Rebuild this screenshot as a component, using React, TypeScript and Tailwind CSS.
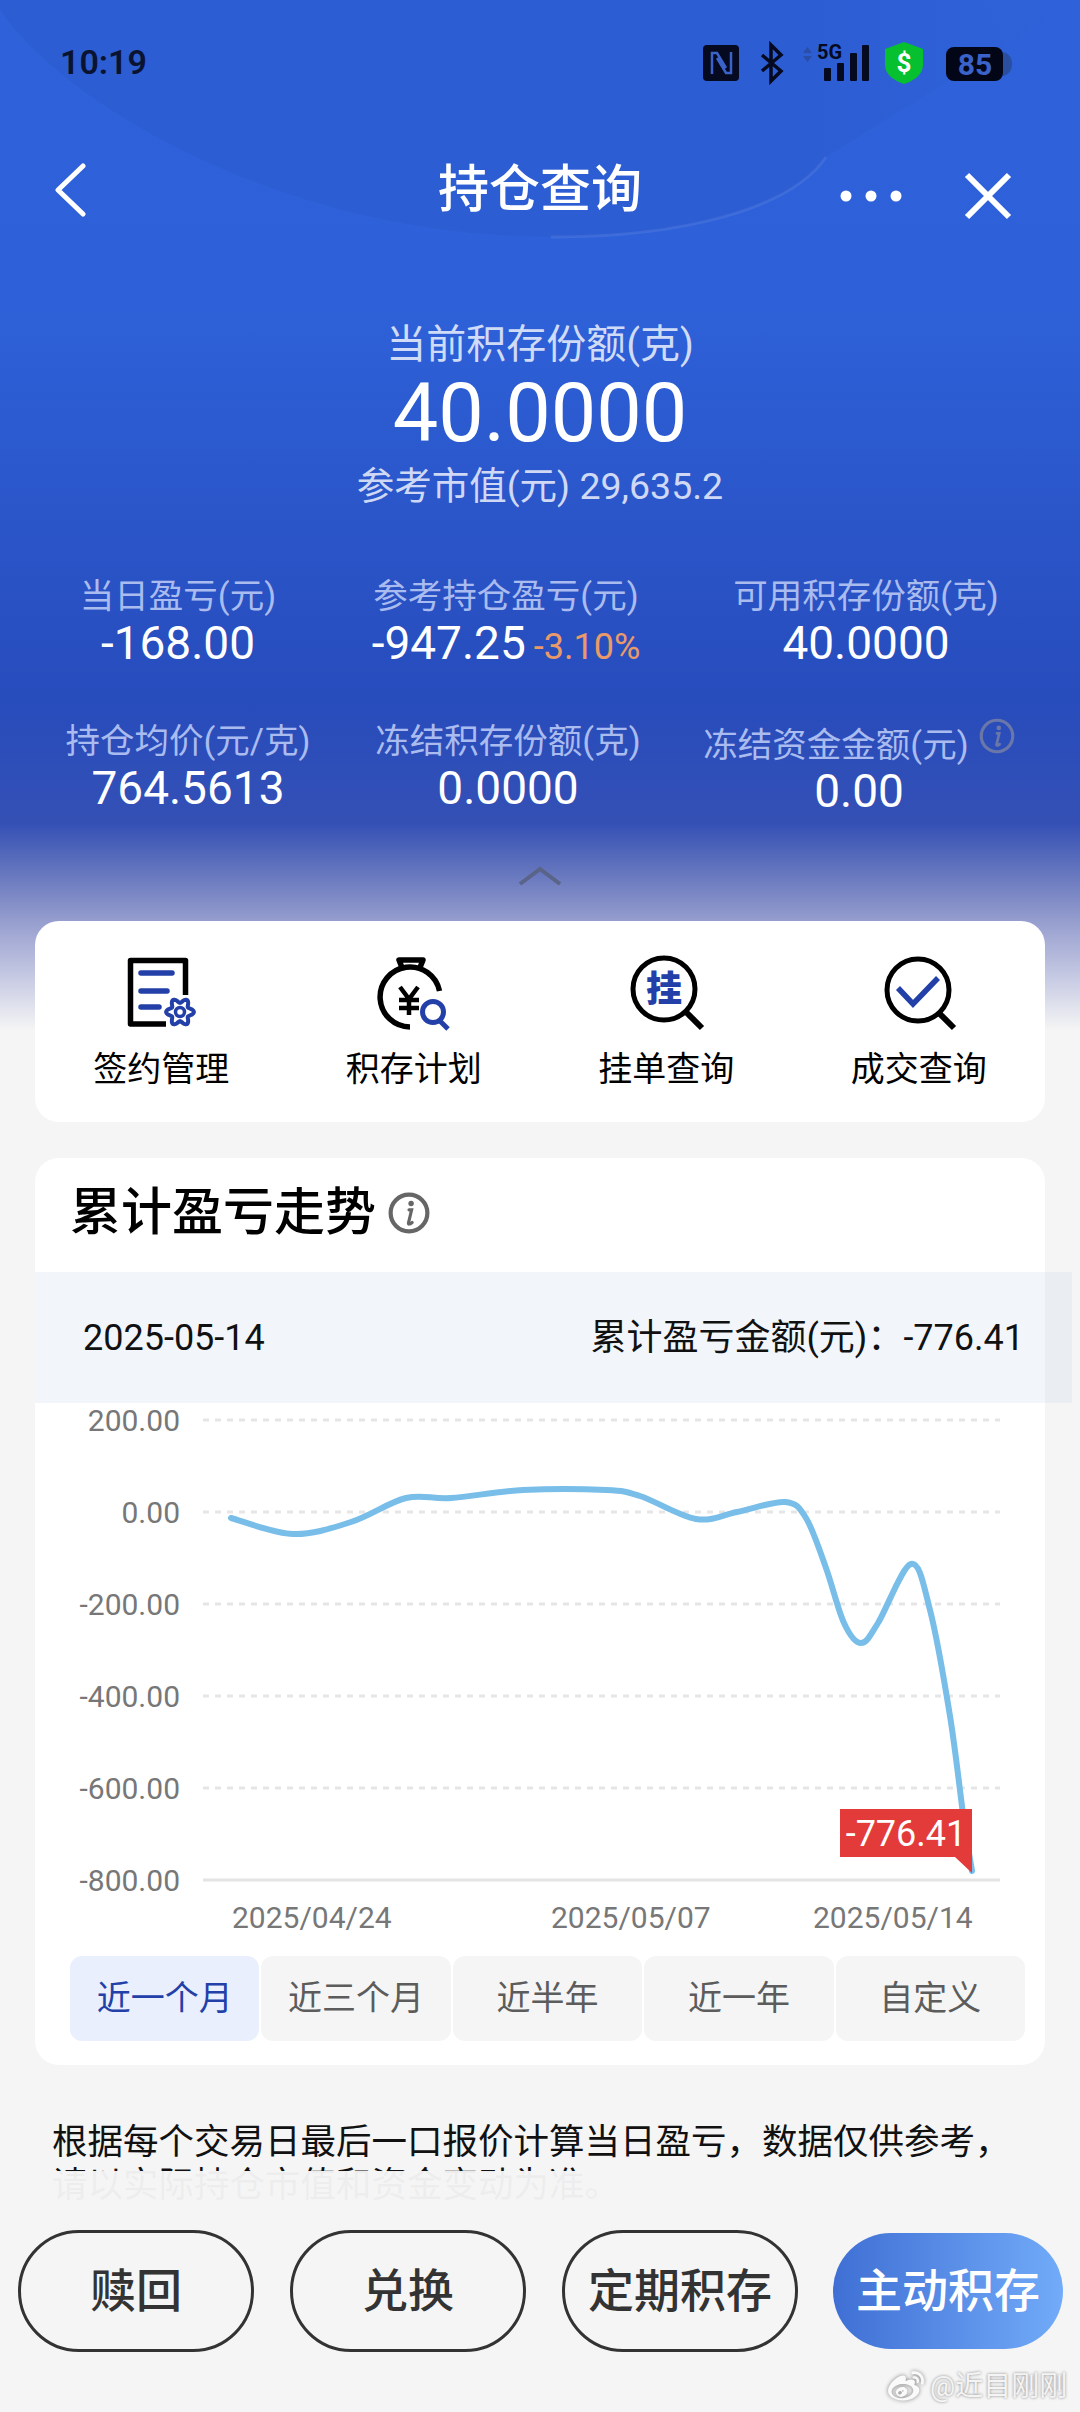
import React from 'react';
import { FaWeibo } from 'react-icons/fa';

const BLUE = '#2340a8';

const curve: [number, number][] = [
  [196, 115], [258, 131], [316, 119], [371, 95], [416, 95], [488, 87], [571, 87], [605, 93],
  [661, 116], [702, 109], [750, 99], [771, 115], [791, 165], [809, 220], [826, 240], [843, 220],
  [876, 161], [895, 207], [915, 313], [929, 418], [937, 468],
];

// catmull-rom through the sampled points
const smoothPath = (pts: [number, number][]) => {
  let d = `M${pts[0][0]} ${pts[0][1]}`;
  for (let i = 0; i < pts.length - 1; i++) {
    const p0 = pts[Math.max(i - 1, 0)];
    const p1 = pts[i];
    const p2 = pts[i + 1];
    const p3 = pts[Math.min(i + 2, pts.length - 1)];
    const c1x = p1[0] + (p2[0] - p0[0]) / 6;
    const c1y = p1[1] + (p2[1] - p0[1]) / 6;
    const c2x = p2[0] - (p3[0] - p1[0]) / 6;
    const c2y = p2[1] - (p3[1] - p1[1]) / 6;
    d += ` C${c1x.toFixed(1)} ${c1y.toFixed(1)} ${c2x.toFixed(1)} ${c2y.toFixed(1)} ${p2[0]} ${p2[1]}`;
  }
  return d;
};

// six lobed cog outline
const cogPath = (cx: number, cy: number) => {
  const parts: string[] = [];
  for (let i = 0; i <= 72; i++) {
    const a = (i / 72) * Math.PI * 2;
    const r = 11.5 + 2.4 * Math.cos(6 * a);
    parts.push(`${i === 0 ? 'M' : 'L'}${(cx + r * Math.cos(a)).toFixed(2)} ${(cy + r * Math.sin(a)).toFixed(2)}`);
  }
  return parts.join(' ') + 'Z';
};

const StatusIcons = () => (
  <svg width="315" height="45" viewBox="0 0 315 45" className="mt-[2px]">
    <rect x="3" y="4" width="36" height="36" rx="4" fill="#050a20" />
    <path d="M12 33V12h5l9 15M31 11v21h-5l-9-15" fill="none" stroke="#3a62c8" strokeWidth="2.5" />
    <path d="M62 14l19 16-10 10V4l10 10-19 16" fill="none" stroke="#050a20" strokeWidth="3.5" />
    <path d="M107.5 6l-4.5 6h9zM103 15h9l-4.5 6z" fill="#2a4ea8" />
    <text x="117" y="18" fontSize="20" fontWeight="700" fill="#050a20">5G</text>
    <rect x="124" y="27" width="7" height="13" rx="1" fill="#050a20" />
    <rect x="137" y="22" width="7" height="18" rx="1" fill="#050a20" />
    <rect x="150" y="12" width="7" height="28" rx="1" fill="#050a20" />
    <rect x="162" y="4" width="7" height="36" rx="1" fill="#050a20" />
    <path d="M204 1l19 7v16c0 10-10 16-19 19-9-3-19-9-19-19V8z" fill="#07c02f" />
    <text x="204" y="31" fontSize="26" fontWeight="700" fill="#fff" textAnchor="middle">$</text>
    <path d="M303 11c5 1 9 5 9 12s-4 11-9 12z" fill="#2a4ea0" />
    <rect x="246" y="6" width="57" height="34" rx="8" fill="#020617" />
    <text x="275" y="34" fontSize="30" fontWeight="700" fill="#3a62c8" textAnchor="middle">85</text>
  </svg>
);

const SignIcon = () => (
  <svg width="80" height="80" viewBox="0 0 80 80">
    <path d="M45 69H9.5V5.5h55V40" fill="none" stroke="#000" strokeWidth="5.5" strokeLinejoin="round" />
    <path d="M20 18h31M20 36h26M20 52h18" stroke={BLUE} strokeWidth="5.5" strokeLinecap="round" />
    <path d={cogPath(59, 57)} fill="#fff" stroke={BLUE} strokeWidth="4" strokeLinejoin="round" />
    <circle cx="59" cy="57" r="4.5" fill="none" stroke={BLUE} strokeWidth="3.5" />
  </svg>
);

const PlanIcon = () => (
  <svg width="80" height="80" viewBox="0 0 80 80">
    <path d="M36 72A30 30 0 1 1 65.5 36" fill="none" stroke="#000" strokeWidth="5.5" />
    <path d="M29 15L25 5h24l-4 10" fill="none" stroke="#000" strokeWidth="5.5" strokeLinejoin="round" />
    <path d="M26 32l9 12 9-12M35 44v16M25 45h20M25 53h20" fill="none" stroke="#000" strokeWidth="4.5" />
    <circle cx="59" cy="57" r="10.5" fill="#fff" stroke={BLUE} strokeWidth="5" />
    <path d="M65 65l9 9" stroke={BLUE} strokeWidth="5" />
  </svg>
);

const OrderIcon = () => (
  <svg width="80" height="80" viewBox="0 0 80 80">
    <circle cx="38" cy="34" r="31" fill="none" stroke="#000" strokeWidth="5" />
    <path d="M60 57l16 16" stroke="#000" strokeWidth="6" />
    <text x="38" y="47" fontSize="36" fontWeight="900" textAnchor="middle" fill={BLUE}>挂</text>
  </svg>
);

const DealIcon = () => (
  <svg width="80" height="80" viewBox="0 0 80 80">
    <circle cx="39" cy="35" r="31" fill="none" stroke="#000" strokeWidth="5" />
    <path d="M60 58l15 15" stroke="#000" strokeWidth="6" />
    <path d="M19 33l15 16 25-26" fill="none" stroke={BLUE} strokeWidth="5.5" />
  </svg>
);

const InfoMark = ({ size, color, width }: { size: number; color: string; width: number }) => (
  <svg width={size} height={size} viewBox="0 0 40 40">
    <circle cx="20" cy="20" r="17.5" fill="none" stroke={color} strokeWidth={width} />
    <circle cx="22" cy="11" r="2.6" fill={color} />
    <path d="M20 17h2.5l-3 12.5c-.3 1.3 1 1.6 3.5-.5" fill="none" stroke={color} strokeWidth="3" strokeLinecap="round" />
  </svg>
);

const Stat = ({ label, value, extra }: { label: string; value: string; extra?: string }) => (
  <div className="flex flex-col items-center">
    <div className="h-[44px] whitespace-nowrap text-[34.5px] leading-[44px] text-[#aabcef]">{label}</div>
    <div className="h-[50px] whitespace-nowrap text-[46px] leading-[50px] text-white">
      {value}
      {extra && <span className="ml-[8px] text-[36px] text-[#ea9a68]">{extra}</span>}
    </div>
  </div>
);

const shortcuts = [
  { label: '签约管理', icon: <SignIcon /> },
  { label: '积存计划', icon: <PlanIcon /> },
  { label: '挂单查询', icon: <OrderIcon /> },
  { label: '成交查询', icon: <DealIcon /> },
];

const ranges = ['近一个月', '近三个月', '近半年', '近一年', '自定义'];
const yTicks = [
  { label: '200.00', y: 17 },
  { label: '0.00', y: 109 },
  { label: '-200.00', y: 201 },
  { label: '-400.00', y: 293 },
  { label: '-600.00', y: 385 },
  { label: '-800.00', y: 477 },
];

const TrendChart = () => (
  <svg width="1010" height="553" viewBox="0 0 1010 553" className="block">
    {yTicks.map((t) => (
      <g key={t.label}>
        <text x="145" y={t.y} fontSize="30" fill="#777" textAnchor="end" dominantBaseline="central">{t.label}</text>
        {t.y === 477 ? (
          <path d="M168 477H965" stroke="#e4e4e4" strokeWidth="3" />
        ) : (
          <path d={`M168 ${t.y}H965`} stroke="#e6e6e6" strokeWidth="3" strokeDasharray="6 6" />
        )}
      </g>
    ))}
    <path d={smoothPath(curve)} fill="none" stroke="#78bee9" strokeWidth="6" strokeLinecap="round" />
    <path d="M805 406H937V470L920 454H805z" fill="#e33a3a" />
    <text x="871" y="431" fontSize="36" fill="#fff" textAnchor="middle" dominantBaseline="central">-776.41</text>
    <text x="197" y="514" fontSize="30" fill="#777" dominantBaseline="central">2025/04/24</text>
    <text x="516" y="514" fontSize="30" fill="#777" dominantBaseline="central">2025/05/07</text>
    <text x="778" y="514" fontSize="30" fill="#777" dominantBaseline="central">2025/05/14</text>
  </svg>
);

export default function App() {
  return (
    <div className="relative h-[2412px] w-[1080px] overflow-hidden bg-[#f5f5f5] font-['Roboto','Noto_Sans_CJK_SC',sans-serif]">
      {/* header backdrop */}
      <div className="absolute inset-x-0 top-0 h-[1030px] bg-[linear-gradient(180deg,#2f62da_0px,#2e61d9_300px,#274cbc_700px,#3450b5_823px,#6d7cc0_880px,#959dce_920px,#c4c8e2_975px,#f5f5f5_1030px)]" />
      <svg width="1080" height="300" viewBox="0 0 1080 300" className="absolute left-0 top-0">
        <defs>
          <linearGradient id="blob" x1="0" x2="1" y1="0" y2="0">
            <stop offset="0" stopColor="#2d5dd3" />
            <stop offset="0.75" stopColor="#2d5dd3" />
            <stop offset="1" stopColor="#2d5dd3" stopOpacity="0" />
          </linearGradient>
        </defs>
        <path d="M0 10C60 100 280 237 551 237C680 237 790 210 826 157L1080 0H0z" fill="url(#blob)" />
        <path d="M551 237C680 237 790 210 826 157" fill="none" stroke="#fff" strokeOpacity="0.08" strokeWidth="3" />
      </svg>

      <div className="relative flex flex-col">
        <div className="flex h-[124px] items-center justify-between pl-[60px] pr-[65px]">
          <span className="text-[34px] font-semibold text-[#0a1330]">10:19</span>
          <StatusIcons />
        </div>

        <div className="grid h-[132px] grid-cols-[1fr_auto_1fr] items-center px-[68px]">
          <svg width="36" height="54" viewBox="0 0 36 54" className="-ml-[16px]">
            <path d="M31 3L6 27l25 24" fill="none" stroke="#fff" strokeWidth="5" strokeLinecap="round" strokeLinejoin="round" />
          </svg>
          <div className="text-[51px] font-medium leading-[60px] text-white">持仓查询</div>
          <div className="mt-[12px] flex items-center justify-end gap-[62px]">
            <svg width="62" height="12" viewBox="0 0 62 12">
              <circle cx="6" cy="6" r="5.5" fill="#fff" />
              <circle cx="31" cy="6" r="5.5" fill="#fff" />
              <circle cx="56" cy="6" r="5.5" fill="#fff" />
            </svg>
            <svg width="48" height="48" viewBox="0 0 48 48">
              <path d="M3 3l42 42M45 3L3 45" stroke="#fff" strokeWidth="6" />
            </svg>
          </div>
        </div>

        <div className="mt-[64px] flex flex-col items-center">
          <div className="text-[40px] leading-[50px] text-[#d0dbf7]">当前积存份额(克)</div>
          <div className="text-[81px] leading-[88px] text-white">40.0000</div>
          <div className="mt-[5px] text-[37.5px] leading-[46px] text-[#cfd9f5]">参考市值(元) 29,635.2</div>
        </div>

        <div className="mt-[65px] grid grid-cols-[356px_300px_420px]">
          <Stat label="当日盈亏(元)" value="-168.00" />
          <Stat label="参考持仓盈亏(元)" value="-947.25" extra="-3.10%" />
          <Stat label="可用积存份额(克)" value="40.0000" />
        </div>

        <div className="mt-[51px] grid grid-cols-[376px_264px_438px]">
          <Stat label="持仓均价(元/克)" value="764.5613" />
          <Stat label="冻结积存份额(克)" value="0.0000" />
          <div className="flex flex-col items-center pt-[4px]">
            <div className="flex h-[44px] items-start gap-[10px]">
              <span className="whitespace-nowrap text-[34.5px] leading-[44px] text-[#aabcef]">冻结资金金额(元)</span>
              <span className="-mt-[5px]">
                <InfoMark size={36} color="#6a77a8" width={3.5} />
              </span>
            </div>
            <div className="-mt-[1px] h-[50px] text-[46px] leading-[50px] text-white">0.00</div>
          </div>
        </div>

        <div className="mt-[50px] flex justify-center">
          <svg width="44" height="20" viewBox="0 0 44 20">
            <path d="M2 18L22 3l20 15" fill="none" stroke="#5a6488" strokeWidth="4" />
          </svg>
        </div>

        <div className="mx-[35px] mt-[35px] grid grid-cols-4 rounded-[24px] bg-white pb-[31px] pt-[34px]">
          {shortcuts.map((s) => (
            <div key={s.label} className="flex flex-col items-center">
              {s.icon}
              <div className="mt-[12px] text-[34px] leading-[44px] text-black">{s.label}</div>
            </div>
          ))}
        </div>

        <div className="mx-[35px] mt-[36px] h-[907px] rounded-[24px] bg-white">
          <div className="flex h-[114px] items-center gap-[12px] pb-[4px] pl-[35px]">
            <span className="text-[51px] font-medium leading-[60px] text-black">累计盈亏走势</span>
            <InfoMark size={42} color="#666" width={4} />
          </div>
          <div className="-mr-[27px] flex h-[131px] items-center justify-between bg-[#bed2eb]/20 pl-[48px] pr-[48px] text-[36px] text-[#111]">
            <span>2025-05-14</span>
            <span>累计盈亏金额(元)：-776.41</span>
          </div>
          <TrendChart />
          <div className="ml-[35px] mr-[20px] flex gap-[2px]">
            {ranges.map((r, i) => (
              <div
                key={r}
                className={`flex h-[85px] flex-1 items-center justify-center rounded-[12px] text-[34px] ${
                  i === 0 ? 'bg-[#e9effc] text-[#2340a8]' : 'bg-[#f5f5f5] text-[#5c5c5c]'
                }`}
              >
                {r}
              </div>
            ))}
          </div>
        </div>

        <div className="mt-[56px] px-[52px] text-[35.5px] leading-[43px] text-[#111]">
          根据每个交易日最后一口报价计算当日盈亏，数据仅供参考，请以实际持仓市值和资金变动为准。
        </div>
      </div>

      {/* bottom action bar sits over the note */}
      <div className="absolute inset-x-0 bottom-0 h-[241px] bg-[#f5f5f5]/97 pl-[18px] pt-[59px]">
        <div className="flex h-[122px] items-center gap-[36px] text-[46px] font-medium text-[#333]">
          {['赎回', '兑换', '定期积存'].map((b) => (
            <div key={b} className="flex h-[122px] w-[236px] items-center justify-center rounded-full border-[3px] border-[#333]">
              {b}
            </div>
          ))}
          <div className="-ml-[1px] flex h-[116px] w-[230px] items-center justify-center rounded-full bg-[linear-gradient(90deg,#3f6fd4,#72abf9)] text-white">
            主动积存
          </div>
        </div>
      </div>

      {/* watermark */}
      <div className="absolute left-[888px] top-[2368px] flex items-center gap-[6px] text-[28px] leading-[38px] text-[#f4f4f4] [text-shadow:0_0_3px_#808080]">
        <FaWeibo className="h-[36px] w-[36px] text-[#fafafa] [filter:drop-shadow(0_0_2px_#808080)]" />
        <span>@近目刚刚</span>
      </div>
    </div>
  );
}
